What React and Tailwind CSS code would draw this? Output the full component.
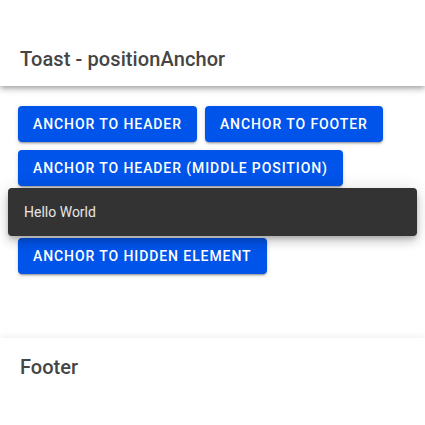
import React from 'react';

const Btn = ({ children }) => (
  <button className="m-[2px] my-[4px] h-[36px] px-[15px] rounded-[4px] bg-[#0054e9] text-white text-[14px] font-medium uppercase tracking-[0.065em] shadow-[0_3px_1px_-2px_rgba(0,0,0,0.2),0_2px_2px_0_rgba(0,0,0,0.14),0_1px_5px_0_rgba(0,0,0,0.12)]">
    {children}
  </button>
);

export default function App() {
  return (
    <div className="relative h-[425px] overflow-hidden bg-white flex flex-col font-['Roboto',sans-serif]">
      <header className="relative z-10 h-[86px] flex items-end px-5 pb-[12px] bg-white shadow-[0_2px_4px_-1px_rgba(0,0,0,0.2),0_4px_5px_0_rgba(0,0,0,0.14),0_1px_10px_0_rgba(0,0,0,0.12)]">
        <h1 className="text-[20px] font-medium text-[#454545] tracking-[0.005em]">Toast - positionAnchor</h1>
      </header>

      <main className="flex-1 px-4 pt-4">
        <div className="flex flex-wrap gap-x-1">
          <Btn>Anchor to Header</Btn>
          <Btn>Anchor to Footer</Btn>
        </div>
        <div className="flex">
          <Btn>Anchor to Header (Middle Position)</Btn>
        </div>
        <div className="h-[44px]" />
        <div className="flex">
          <Btn>Anchor to Hidden Element</Btn>
        </div>
      </main>

      <footer className="h-[87px] px-5 pt-[14px] bg-white shadow-[0_-2px_6px_rgba(0,0,0,0.06)]">
        <h2 className="text-[20px] font-medium text-[#454545]">Footer</h2>
      </footer>

      <div className="absolute left-[8px] right-[8px] top-[188px] h-[48px] rounded-[4px] bg-[#333333] flex items-center px-4 shadow-[0_3px_5px_-1px_rgba(0,0,0,0.2),0_6px_10px_0_rgba(0,0,0,0.14),0_1px_18px_0_rgba(0,0,0,0.12)]">
        <span className="text-[14px] text-[#e6e6e6]">Hello World</span>
      </div>
    </div>
  );
}
